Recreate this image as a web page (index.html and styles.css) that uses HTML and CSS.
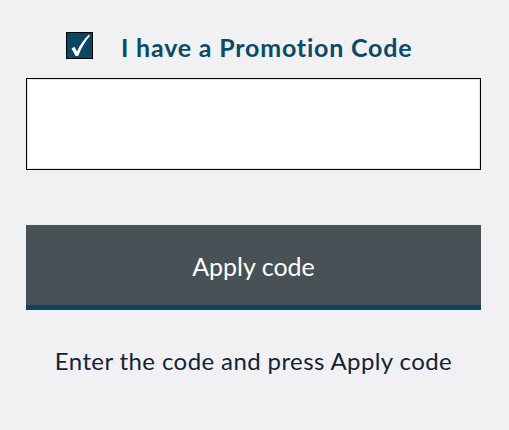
FILE: index.html
```
<!DOCTYPE html>
<html lang="en">
<head>
	<meta charset="UTF-8">
	<meta name="viewport" content="width=device-width, initial-scale=1.0">
	<title>Promotion Code</title>
	<link rel="stylesheet" href="styles.css">
</head>
<body>
	<div class="promo">
		<label class="promoCheck">
			<span class="box">
				<svg width="25" height="25" viewBox="0 0 25 25"><path d="M4.5 15.5 L7.5 13.8 L10 18.5 Q14.5 8.5 21.8 1.8 L23 2.8 Q15.5 11.5 11.2 23 L8.6 23 Z" fill="#fff"/></svg>
			</span>
			<span class="promoLabel">I have a Promotion Code</span>
		</label>
		<input class="promoInput" type="text">
		<button class="btnApply">Apply code</button>
		<p class="hint">Enter the code and press Apply code</p>
	</div>
</body>
</html>
```
FILE: styles.css
```
body {
	margin: 0;
	background-color: #f1f1f3;
	font-family: Lato, "Open Sans", sans-serif;
}
.promo {
	padding: 31px 28px 0 26px;
	display: flex;
	flex-direction: column;
}
.promoCheck {
	display: flex;
	align-items: center;
	gap: 28px;
	margin-left: 40px;
	height: 28px;
}
.box {
	width: 25px; height: 25px;
	border: 1px solid #000;
	background-color: #0b4765;
	display: flex;
}
.promoLabel {
	font-size: 25px;
	font-weight: bold;
	letter-spacing: 0.8px;
	color: #0b4a69;
	padding-top: 3px;
}
.promoInput {
	margin-top: 19px;
	height: 92px;
	box-sizing: border-box;
	border: 1px solid #000;
	box-shadow: inset 0 0 0 1px #e6e6e6;
	background-color: #fff;
}
.btnApply {
	margin-top: 55px;
	height: 85px;
	border: none;
	border-bottom: 5px solid #0a4562;
	background-color: #475156;
	color: #fff;
	font-family: inherit;
	font-size: 25px;
	padding-top: 2px;
}
.hint {
	margin: 36px 0 0;
	text-align: center;
	font-size: 24px;
	letter-spacing: 0.4px;
	color: #13233a;
}
```
